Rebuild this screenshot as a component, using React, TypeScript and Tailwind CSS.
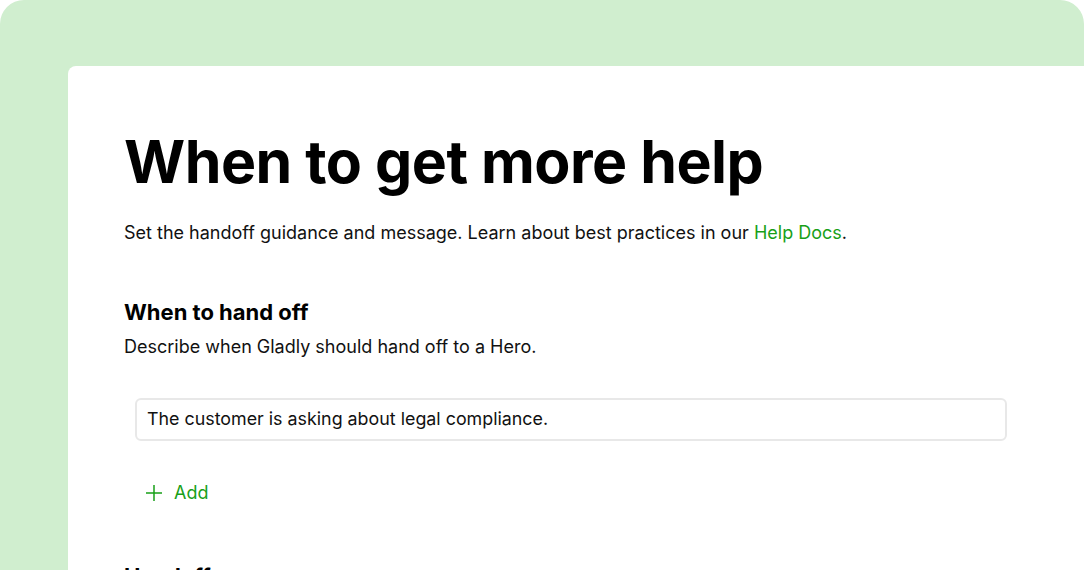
import React from "react";

export default function App() {
  return (
    <div
      className="h-[570px] w-[1084px] overflow-hidden rounded-t-[24px] bg-[#d0eecf] pl-[68px] pt-[66px]"
      style={{ fontFamily: "Inter, 'Noto Sans', sans-serif" }}
    >
      <div className="h-full rounded-tl-[8px] bg-white pl-[56px] pr-[77px] pt-[60px] text-[#111]">
        <h1 className="text-[59px] font-bold leading-[72px] tracking-[-0.5px] text-black">When to get more help</h1>
        <p className="mt-[21px] text-[18px] leading-[28px]">
          Set the handoff guidance and message. Learn about best practices in our{" "}
          <span className="text-[#18a018]">Help Docs</span>.
        </p>
        <h2 className="mt-[50px] text-[22px] font-bold leading-[30px] text-black">When to hand off</h2>
        <p className="mt-[6px] text-[18px] leading-[28px]">Describe when Gladly should hand off to a Hero.</p>
        <div className="ml-[11px] mt-[37px] flex h-[43px] items-center rounded-[6px] border-2 border-[#e8e8e8] px-[10px] text-[17.85px]">
          The customer is asking about legal compliance.
        </div>
        <div className="ml-[21px] mt-[38px] flex items-center gap-[11px] text-[18px] text-[#18a018]">
          <svg width="18" height="18" viewBox="0 0 18 18" fill="none" stroke="currentColor" strokeWidth="1.5">
            <path d="M9 1v16M1 9h16" />
          </svg>
          <span>Add</span>
        </div>
        <h2 className="mt-[55px] text-[22px] font-bold leading-[30px] text-black">Handoff message</h2>
      </div>
    </div>
  );
}
